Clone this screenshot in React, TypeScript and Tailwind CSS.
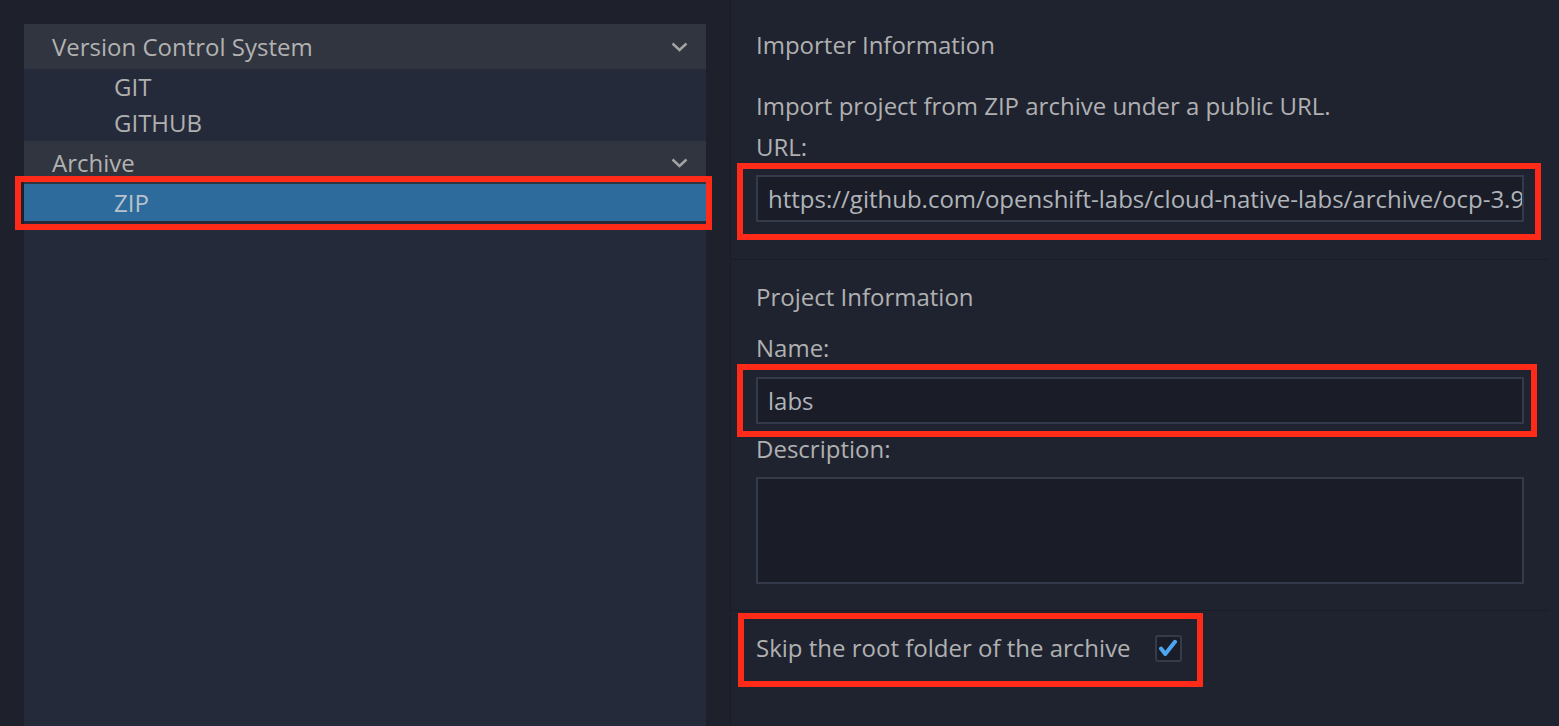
import React from "react";

const font = { fontFamily: "'Open Sans', 'Noto Sans', sans-serif" };

// hand-drawn style annotation frame that sits over the wrapped control
const Marker = ({ className }: { className: string }) => (
  <div
    className={`pointer-events-none absolute border-[6px] border-[#ff2a18] ${className}`}
  />
);

const Chevron = () => (
  <svg width="17" height="10" viewBox="0 0 17 10" className="text-[#a3a3a3]">
    <path d="M1.5 1.5 L8.5 8 L15.5 1.5" fill="none" stroke="currentColor" strokeWidth="2.4" />
  </svg>
);

const GroupHeader = ({ title, h }: { title: string; h: string }) => (
  <div className={`flex ${h} items-center justify-between bg-[#31353f] pl-7 pr-[18px]`}>
    <span className="text-[24px] text-[#b2b2b2]">{title}</span>
    <Chevron />
  </div>
);

const TreeItem = ({ label, h }: { label: string; h: string }) => (
  <div className={`flex ${h} items-center pl-[90px] text-[24px] text-[#b0b0b0]`}>{label}</div>
);

const Label = ({ children, className = "" }: any) => (
  <div className={`h-[30px] leading-[30px] text-[24px] text-[#b0b0b0] ${className}`}>{children}</div>
);

const App = () => {
  return (
    <div className="flex h-[726px] w-full overflow-hidden bg-[#1e212b]" style={font}>
      {/* left tree */}
      <div className="flex w-[730px] shrink-0 pl-6 pt-6 pr-6">
        <div className="flex-1 bg-[#252a3a]">
          <GroupHeader title="Version Control System" h="h-[45px]" />
          <TreeItem label="GIT" h="h-9" />
          <TreeItem label="GITHUB" h="h-9" />
          <GroupHeader title="Archive" h="h-[43px]" />
          <div className="relative">
            <div className="flex h-[37px] items-center bg-[#2c6b9b] pl-[90px] text-[24px] text-[#b9c2cc]">
              ZIP
            </div>
            <Marker className="-left-[9px] -right-[6px] -top-[8px] -bottom-[9px]" />
          </div>
        </div>
      </div>

      {/* right form */}
      <div className="min-w-0 flex-1 border-l border-[#1a1d26] bg-[#1f2330] pr-[10px]">
        <div className="pl-[25px] pr-[25px]">
          <Label className="mt-[30px]">Importer Information</Label>
          <Label className="mt-[31px] text-[#9eaabb]">
            Import project from ZIP archive under a public URL.
          </Label>
          <Label className="mt-[11px]">URL:</Label>
          <div className="relative mt-[13px]">
            <div className="flex h-[47px] items-center overflow-hidden whitespace-nowrap border-2 border-[#343a4a] bg-[#1a1d27] pl-[10px] pr-2 text-[24px] text-[#b0b4ba]">
              https://github.com/openshift-labs/cloud-native-labs/archive/ocp-3.9
            </div>
            <Marker className="-left-[19px] -right-[17px] -top-[12px] -bottom-[18px]" />
          </div>
        </div>

        <div className="mt-[37px] h-px bg-[#1a1d26]" />

        <div className="pl-[25px] pr-[25px]">
          <Label className="mt-[22px]">Project Information</Label>
          <Label className="mt-[21px]">Name:</Label>
          <div className="relative mt-[14px]">
            <div className="flex h-[47px] items-center border-2 border-[#343a4a] bg-[#1a1d27] pl-[10px] text-[24px] text-[#b0b4ba]">
              labs
            </div>
            <Marker className="-left-[19px] -right-[13px] -top-[13px] -bottom-[13px]" />
          </div>
          <Label className="mt-[10px]">Description:</Label>
          <div className="mt-[13px] h-[107px] border-2 border-[#343a4a] bg-[#1a1d27]" />
        </div>

        <div className="mt-[26px] h-px bg-[#1a1d26]" />

        <div className="pl-[25px]">
          <div className="relative mt-[22px] inline-flex items-center">
            <span className="h-[30px] leading-[30px] text-[24px] text-[#b0b0b0]">
              Skip the root folder of the archive
            </span>
            <span className="ml-[24px] flex h-[27px] w-[27px] items-center justify-center rounded-[3px] border-2 border-[#353b4a] bg-[#1a1d27]">
              <svg width="20" height="18" viewBox="0 0 20 18">
                <path
                  d="M3 9.5 L7.3 15 L17 2.8"
                  fill="none"
                  stroke="#4ea5f2"
                  strokeWidth="4"
                  strokeLinecap="round"
                  strokeLinejoin="round"
                />
              </svg>
            </span>
            <Marker className="-left-[18px] -right-[21px] -top-[20px] -bottom-[24px]" />
          </div>
        </div>
      </div>
    </div>
  );
};

export default App;
